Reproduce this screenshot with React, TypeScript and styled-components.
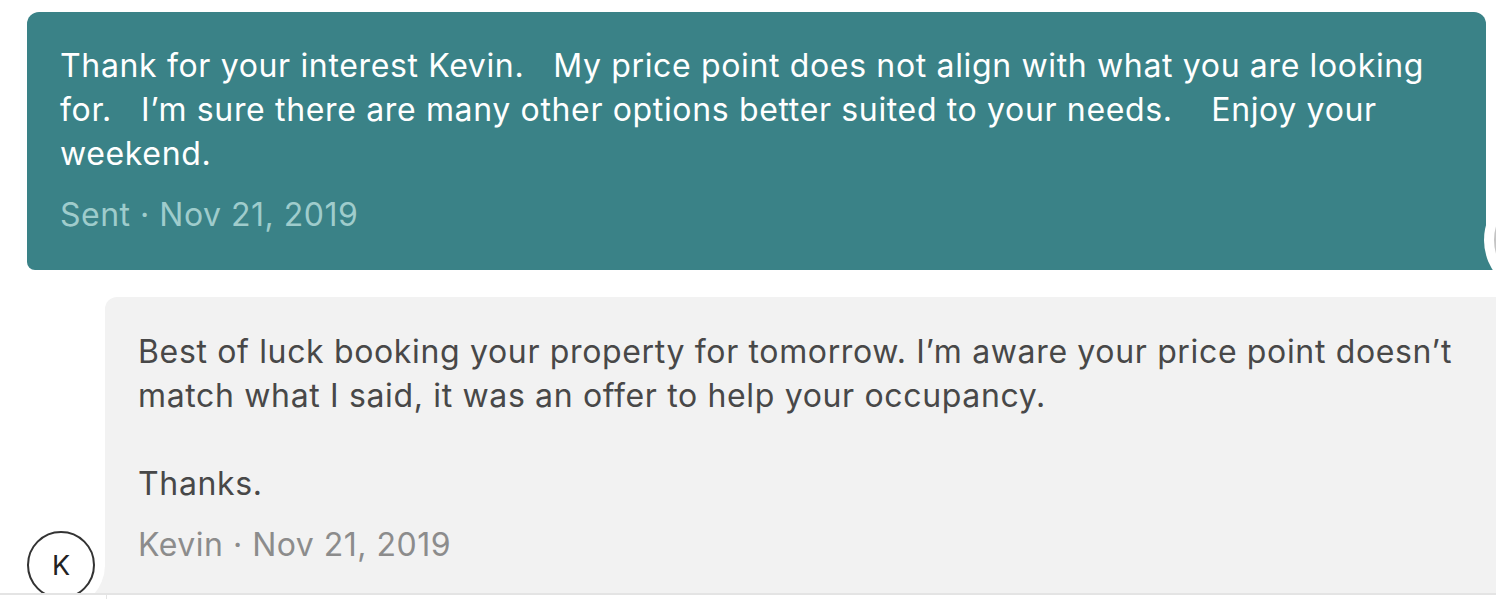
import * as React from 'react';
import styled, { createGlobalStyle } from 'styled-components';

const GlobalStyle = createGlobalStyle`
    html, body {
        margin: 0;
        padding: 0;
        background: #ffffff;
    }
    body {
        font-family: Inter, "Noto Sans", "Liberation Sans", sans-serif;
        -webkit-font-smoothing: antialiased;
    }
`;

const Page = styled.div`
    width: 1496px;
    height: 599px;
    overflow: hidden;
    display: flex;
    flex-direction: column;
`;

const Thread = styled.div`
    height: 593px;
    overflow: hidden;
    display: flex;
    flex-direction: column;
    gap: 27px;
    padding: 12px 0 0 27px;
    box-sizing: border-box;
`;

const Row = styled.div`
    display: flex;
    align-items: flex-end;
    flex-shrink: 0;
`;

interface BubbleProps {
    outgoing?: boolean;
}

const Bubble = styled.div<BubbleProps>`
    position: relative;
    flex-shrink: 0;
    width: 1459px;
    box-sizing: border-box;
    padding: ${(props) => props.outgoing ? '32px 33px 33px' : '33px 33px 26px'};
    background: ${(props) => props.outgoing ? '#3a8287' : '#f2f2f2'};
    color: ${(props) => props.outgoing ? '#ffffff' : '#484848'};
    border-radius: ${(props) => props.outgoing ? '12px 12px 0 8px' : '12px 12px 12px 0'};

    /* corner that tucks in behind the avatar */
    &::after {
        content: '';
        position: absolute;
        bottom: 0;
        width: 24px;
        height: ${(props) => props.outgoing ? '45px' : '26px'};
        background: inherit;
        ${(props) => props.outgoing ? 'right: -24px;' : 'left: -18px;'}
    }
`;

const MessageText = styled.div`
    font-size: 32px;
    line-height: 44px;
    letter-spacing: 0.65px;
    white-space: pre-wrap;
`;

const Meta = styled.div<BubbleProps>`
    margin-top: 17px;
    font-size: 32px;
    line-height: 44px;
    letter-spacing: 0.5px;
    color: ${(props) => props.outgoing ? '#9fcccc' : '#8c8c8c'};
`;

interface HaloProps {
    size: number;
}

const Halo = styled.div<HaloProps>`
    position: relative;
    z-index: 1;
    flex-shrink: 0;
    width: ${(props) => props.size}px;
    height: ${(props) => props.size}px;
    border-radius: 50%;
    background: #ffffff;
    display: flex;
    align-items: center;
    justify-content: center;
`;

const OwnerHalo = styled(Halo)`
    margin-left: -2px;
    margin-bottom: -26px;
`;

const GuestHalo = styled(Halo)`
    margin-left: -10px;
    margin-bottom: -16px;
    order: -1;
`;

const Avatar = styled.div<HaloProps>`
    width: ${(props) => props.size}px;
    height: ${(props) => props.size}px;
    box-sizing: border-box;
    border-radius: 50%;
    border: 2px solid #333333;
    display: flex;
    align-items: center;
    justify-content: center;
    font-size: 27px;
    color: #222222;
    background: #ffffff;
`;

const OwnerAvatar = styled(Avatar)`
    border-color: #c4c4c4;
    background: #e9e9e9;
`;

const Footer = styled.div`
    height: 6px;
    border-top: 2px solid #e4e4e4;
    box-sizing: border-box;
    display: flex;
`;

const FooterDivider = styled.div`
    margin-left: 106px;
    width: 1px;
    background: #e4e4e4;
`;

const outgoingText =
    'Thank for your interest Kevin.   My price point does not align with what you are looking for.   I’m sure there are many other options better suited to your needs.    Enjoy your weekend.';

const incomingText =
    'Best of luck booking your property for tomorrow. I’m aware your price point doesn’t match what I said, it was an offer to help your occupancy.\n\nThanks.';

export default function App() {
    return (
        <Page>
            <GlobalStyle />
            <Thread>
                <Row>
                    <Bubble outgoing>
                        <MessageText>{outgoingText}</MessageText>
                        <Meta outgoing>Sent · Nov 21, 2019</Meta>
                    </Bubble>
                    <OwnerHalo size={112}>
                        <OwnerAvatar size={92} />
                    </OwnerHalo>
                </Row>
                <Row>
                    <Bubble>
                        <MessageText>{incomingText}</MessageText>
                        <Meta>Kevin · Nov 21, 2019</Meta>
                    </Bubble>
                    <GuestHalo size={88}>
                        <Avatar size={68}>K</Avatar>
                    </GuestHalo>
                </Row>
            </Thread>
            <Footer>
                <FooterDivider />
            </Footer>
        </Page>
    );
}
